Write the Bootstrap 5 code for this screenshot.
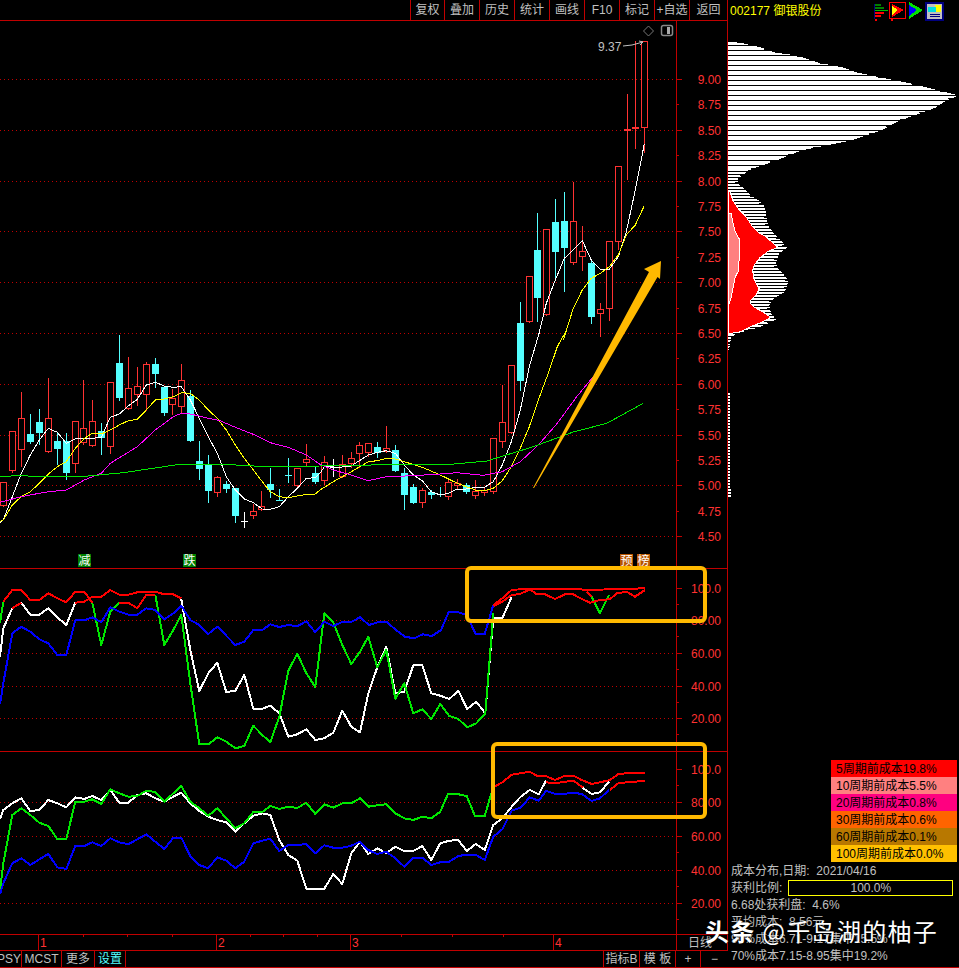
<!DOCTYPE html>
<html lang="zh">
<head>
    <meta charset="UTF-8">
    <title>002177 御银股份</title>
    <link href="https://cdn.jsdelivr.net/npm/bootstrap@5.3.0/dist/css/bootstrap.min.css" rel="stylesheet">
    <style>
        body {
            background-color: #000;
            color: #c0c0c0;
            font-family: "Liberation Sans", "Noto Sans CJK SC", sans-serif;
            font-size: 12px;
            line-height: 1;
            overflow: hidden;
        }
        .terminal { width: 959px; height: 968px; position: relative; }
        .chart-col { width: 728px; }
        .info-col { width: 231px; border-bottom: 1px solid #c00000; height: 968px; }
        .toolbar { height: 21px; border-bottom: 1px solid #c00000; border-right: 1px solid #c00000; }
        .tool-btn {
            width: 35px; height: 20px; padding: 0; border: 0; border-radius: 0;
            border-right: 1px solid #c00000; color: #c0c0c0; font-size: 12px; line-height: 1;
        }
        .tool-btn:first-child { border-left: 1px solid #c00000; }
        .tool-btn:last-child { width: 37px; border-right: 0; }
        #chart { display: block; width: 728px; height: 929px; }
        #chart text { font-family: "Liberation Sans", "Noto Sans CJK SC", sans-serif; font-size: 12px; }
        .axis-txt { fill: #ff3232; }
        .tabs { height: 18px; border-top: 1px solid #c00000; border-bottom: 1px solid #c00000; }
        .tab-cell {
            height: 16px; border-right: 1px solid #c00000; overflow: hidden; white-space: nowrap;
            display: flex; align-items: center; justify-content: center;
        }
        .w-psy { width: 22px; justify-content: flex-end; }
        .w-mcst { width: 40px; }
        .w-more { width: 33px; }
        .w-set { width: 31px; color: #54ffff; }
        .w-idx { width: 36px; }
        .w-plus { width: 25px; }
        .w-minus { width: 27px; border-right: 0; }
        .symbol-bar { height: 21px; padding-left: 2px; }
        .symbol-name { color: #ffff00; font-size: 12px; }
        .symbol-icons { margin-left: 53px; gap: 1px; }
        #chips { display: block; width: 231px; height: 739px; }
        .cost-legend { width: 126px; margin-left: 103px; }
        .cost-row { height: 17px; padding-left: 5px; color: #000; display: flex; align-items: center; white-space: nowrap; }
        .stats { padding: 0 0 0 3px; }
        .stat-row { height: 17px; display: flex; align-items: center; white-space: nowrap; }
        .profit-box {
            width: 165px; height: 16px; margin-left: 6px; border: 1px solid #ffff00;
            display: flex; align-items: center; justify-content: center;
        }
        .watermark {
            position: absolute; left: 705px; top: 916px; color: #fff; font-size: 24px; line-height: 30px;
            font-family: "Noto Sans CJK SC", sans-serif; letter-spacing: 1.3px; white-space: nowrap;
            text-shadow: 0 0 2px rgba(0, 0, 0, .7);
        }
        .watermark b { font-weight: 700; }
    </style>
</head>
<body>
    <div class="terminal d-flex">
        <!-- left: toolbar, chart, tabs -->
        <div class="chart-col d-flex flex-column">
            <div class="toolbar d-flex justify-content-end">
                <button class="btn tool-btn">复权</button>
                <button class="btn tool-btn">叠加</button>
                <button class="btn tool-btn">历史</button>
                <button class="btn tool-btn">统计</button>
                <button class="btn tool-btn">画线</button>
                <button class="btn tool-btn">F10</button>
                <button class="btn tool-btn">标记</button>
                <button class="btn tool-btn">+自选</button>
                <button class="btn tool-btn">返回</button>
            </div>
            <svg id="chart" viewBox="0 21 728 929"></svg>
            <div class="tabs d-flex">
                <div class="tab-cell w-psy">PSY</div>
                <div class="tab-cell w-mcst">MCST</div>
                <div class="tab-cell w-more">更多</div>
                <div class="tab-cell w-set">设置</div>
                <div class="tab-cell flex-grow-1"></div>
                <div class="tab-cell w-idx">指标B</div>
                <div class="tab-cell w-idx">模 板</div>
                <div class="tab-cell w-plus">+</div>
                <div class="tab-cell w-minus">−</div>
            </div>
        </div>

        <!-- right: chip distribution and stats -->
        <div class="info-col d-flex flex-column">
            <div class="symbol-bar d-flex align-items-center">
                <span class="symbol-name">002177 御银股份</span>
                <div class="symbol-icons d-flex">
                    <svg width="14" height="21" viewBox="0 0 14 21" shape-rendering="crispEdges">
                        <rect x="0" y="4" width="1" height="15" fill="#000080"/>
                        <rect x="1" y="4" width="6" height="2" fill="#008000"/>
                        <rect x="1" y="7" width="9" height="2" fill="#008000"/>
                        <rect x="1" y="10" width="13" height="1" fill="#00c000"/>
                        <rect x="1" y="12" width="9" height="2" fill="#ff0000"/>
                        <rect x="1" y="15" width="6" height="2" fill="#ff0000"/>
                        <rect x="1" y="19" width="2" height="2" fill="#ff0000"/>
                    </svg>
                    <svg width="18" height="21" viewBox="0 0 18 21" shape-rendering="crispEdges">
                        <rect x=".5" y="2.5" width="16" height="16" fill="#000" stroke="#ff0000"/>
                        <polygon points="3,4 15,10 3,17" fill="#ff0000"/>
                        <polygon points="3,6 9,10 3,15" fill="#ffff00"/>
                        <rect x="2" y="19" width="2" height="2" fill="#ff0000"/>
                    </svg>
                    <svg width="16" height="21" viewBox="0 0 16 21" shape-rendering="crispEdges">
                        <polygon points="1,2 15,10 1,19" fill="#00e000"/>
                        <polygon points="1,5 9,10 1,16" fill="#0000ff"/>
                    </svg>
                    <svg width="20" height="21" viewBox="0 0 20 21" shape-rendering="crispEdges">
                        <rect x="0" y="2" width="19" height="19" fill="#000080"/>
                        <rect x="2" y="4" width="15" height="15" fill="#c0c0c0"/>
                        <rect x="10" y="5" width="6" height="7" fill="#ffff00"/>
                        <rect x="3" y="7" width="8" height="5" fill="#00e0e0"/>
                        <rect x="5" y="14" width="10" height="1" fill="#000080"/>
                        <rect x="5" y="16" width="10" height="1" fill="#000080"/>
                    </svg>
                </div>
            </div>
            <svg id="chips" viewBox="727 21 231 739" shape-rendering="crispEdges"></svg>
            <div class="cost-legend">
                <div class="cost-row" style="background:#ff0000">5周期前成本19.8%</div>
                <div class="cost-row" style="background:#ff8080">10周期前成本5.5%</div>
                <div class="cost-row" style="background:#ff0080">20周期前成本0.8%</div>
                <div class="cost-row" style="background:#ff6400">30周期前成本0.6%</div>
                <div class="cost-row" style="background:#b87800">60周期前成本0.1%</div>
                <div class="cost-row" style="background:#ffc000">100周期前成本0.0%</div>
            </div>
            <div class="stats">
                <div class="stat-row">成本分布,日期:&nbsp; 2021/04/16</div>
                <div class="stat-row">获利比例:<div class="profit-box">100.0%</div></div>
                <div class="stat-row">6.68处获利盘:&nbsp; 4.6%</div>
                <div class="stat-row">平均成本:&nbsp; 8.56元</div>
                <div class="stat-row">90%成本6.71-9.17集中15.5%</div>
                <div class="stat-row">70%成本7.15-8.95集中19.2%</div>
            </div>
        </div>
        <div class="watermark"><b>头条</b> @千岛湖的柚子</div>
    </div>

    <script src="https://cdn.jsdelivr.net/npm/bootstrap@5.3.0/dist/js/bootstrap.bundle.min.js"></script>
    <script>
        const RED = '#ff3232', CYAN = '#54ffff', LINE = '#c00000', ORANGE = '#ffb900';

        // candles: high, body top, body bottom, low, colour (r/c/w). y is px in the picture * 3, origin differs per block
        const block1 = [
            [457,457,527,530,'r'],[304,304,422,428,'r'],[186,265,359,410,'r'],[252,312,336,342,'c'],[237,276,309,345,'c'],
            [144,265,365,365,'r'],[309,333,357,405,'c'],[309,333,429,450,'c'],[274,274,401,429,'r'],[150,295,340,345,'r'],
            [210,274,347,347,'r'],[279,303,324,375,'c'],[157,157,350,372,'r'],[15,99,204,212,'c'],[82,175,236,236,'r'],
            [111,169,196,228,'r'],[96,103,194,244,'r'],[84,102,132,174,'c'],[171,171,249,258,'c'],[178,205,224,255,'r'],
            [102,151,231,250,'r'],[180,198,333,333,'c'],[333,393,417,450,'c'],[375,405,483,519,'c'],[438,442,488,501,'r'],
            [453,462,477,489,'c'],[474,474,558,579,'c'],[546,574,574,594,'w'],[522,544,557,567,'r'],[483,529,539,543,'r'],
            [413,462,480,504,'c'],[477,509,509,513,'c'],[384,436,436,459,'c'],[414,414,467,467,'r'],[342,388,398,408,'r'],
            [411,429,456,462,'c']
        ];
        const block2 = [
            [378,397,453,465,'r'],[387,411,411,441,'w'],[375,403,441,441,'r'],[366,385,401,415,'r'],[336,346,372,414,'r'],
            [340,340,368,382,'r'],[336,351,369,384,'c'],[288,355,366,366,'r'],[345,360,423,423,'c'],[414,429,495,540,'c'],
            [462,471,519,522,'c'],[475,481,519,534,'r'],[480,486,495,507,'c'],[471,492,492,501,'c'],[448,456,502,510,'r'],
            [448,459,467,480,'r'],[459,465,486,492,'c'],[450,484,497,507,'r'],[471,480,489,498,'r'],[325,325,485,492,'r'],
            [165,277,335,354,'r'],[106,106,308,308,'r']
        ];
        const block3 = [
            [786,849,1023,1054,'c'],[709,709,845,845,'r'],[519,630,774,846,'c'],[568,568,824,824,'r'],[477,546,636,720,'c'],
            [456,543,624,756,'c'],[426,544,668,675,'r'],[558,634,650,693,'r'],[660,669,831,852,'c'],[790,808,821,890,'r'],
            [604,604,806,843,'r'],[379,379,605,630,'r'],[162,268,274,421,'r'],[4,262,268,327,'r'],[4,4,265,340,'r']
        ];
        const candles = [
            ...block1.map(c => [(c[0]/3+330),(c[1]/3+330),(c[2]/3+330),(c[3]/3+330),c[4]]),
            ...block2.map(c => [(c[0]/3+330),(c[1]/3+330),(c[2]/3+330),(c[3]/3+330),c[4]]),
            ...block3.map(c => [(c[0]/3+40),(c[1]/3+40),(c[2]/3+40),(c[3]/3+40),c[4]])
        ];

        // moving averages, traced from the crops: [origin x, origin y, x, y, x, y ...] in crop px
        const toAbs = (ox, oy, pts) => {
            const out = [];
            for (let i = 0; i < pts.length; i += 2) out.push((pts[i]/3 + ox).toFixed(1) + ',' + (pts[i+1]/3 + oy).toFixed(1));
            return out;
        };
        const ma = [
            ['#ffffff', 1, [...toAbs(0,330,[0,577,10,570,37,500,64,430,91,375,118,330,145,295,172,307,199,340,226,327,253,325,277,325,304,322,331,262,358,252,385,228,412,208,439,165,466,157,493,168,520,172,544,170,571,210,598,265,625,320,652,370,679,440,706,480,733,507,760,518,787,537,811,538,838,530,865,500,892,475,919,445,946,443,960,430]),
                ...toAbs(320,330,[13,410,40,411,67,411,94,408,118,392,145,375,172,367,199,362,226,370,253,405,280,435,307,452,334,485,361,495,385,490,412,477,439,477,466,472,493,472,520,455,547,405,574,335,601,240,628,110,660,0]),
                ...toAbs(490,40,[142,900,169,790,196,720,223,655,250,630,277,602,304,660,331,688,358,688,385,650,409,575,436,450,463,312])]],
            ['#ffff00', 1, [...toAbs(0,330,[0,575,10,570,37,525,64,500,91,485,118,460,145,432,172,410,199,395,226,355,253,325,277,310,304,312,331,300,358,285,385,272,412,268,439,240,466,210,493,207,520,200,544,188,571,190,598,210,625,240,652,265,679,300,706,345,733,385,760,420,787,455,811,485,838,500,865,503,892,498,919,493,946,492,960,480]),
                ...toAbs(320,330,[40,455,94,425,145,395,172,392,199,385,226,387,253,395,307,412,361,435,412,460,466,480,493,482,520,475,547,452,574,410,601,355,628,290,655,210,685,130,712,50,740,0]),
                ...toAbs(490,40,[220,900,250,805,277,750,304,715,331,700,358,680,385,645,409,585,436,555,463,497])]],
            ['#ff00ff', 1, [...toAbs(0,330,[0,517,64,500,118,490,145,485,199,480,253,450,304,430,331,400,412,350,466,300,520,260,544,250,571,252,625,265,660,272,706,292,760,313,811,338,865,352,919,375,960,403]),
                ...toAbs(320,330,[40,420,94,435,145,452,199,440,280,437,361,432,412,428,490,436,547,425,601,395,655,345,712,280,770,200,820,140,880,60])]],
            ['#00e800', 1, [...toAbs(0,330,[0,440,50,437,160,440,265,438,370,428,450,416,540,403,690,404,800,410,960,408]),
                ...toAbs(320,330,[200,404,370,405,500,393,640,350,760,306,860,280,970,220])]]
        ];

        // indicator lines, width 2
        const W = '#ffffff', G = '#00e800', B = '#0000ff', R = '#ff0000';
        const ind = [
            [W, [...toAbs(0,560,[0,290,10,205,37,145,64,128,91,164,118,164,145,145,172,172,199,195,226,128])]],
            [W, [...toAbs(0,560,[544,118,571,270,598,393,625,340,652,308,679,396,706,392,733,345,760,446,787,446,811,437,838,460,865,530,892,523,919,508,946,540,973,535,1000,518,1027,452,1054,500,1080,517]),
                ...toAbs(360,550,[25,430,52,352,79,290,106,430,133,425,160,346,187,346,214,430,241,437,268,447,295,422,322,477,349,455,376,490,400,205,427,205,455,140])]],
            [G, toAbs(0,560,[0,190,10,125])],
            [G, toAbs(0,560,[277,128,304,255,331,155,358,128])],
            [G, [...toAbs(0,560,[466,104,493,255,520,210,544,165,571,370,598,553,625,553,652,532,679,545,706,565,733,558,760,497,787,525,811,547,838,470,865,332,892,281,919,340,946,381,973,160,1000,187,1027,255,1054,312,1080,275]),
                ...toAbs(360,550,[25,260,52,352,79,300,106,446,133,400,160,490,187,478,214,507,241,462,268,498,295,507,322,532,349,520,376,490,400,190])]],
            [G, toAbs(360,550,[695,140,720,190,747,135])],
            [B, [...toAbs(0,560,[0,433,10,370,37,220,64,200,91,215,118,238,145,250,172,285,199,285,226,181,253,181,277,172,304,187,331,142,358,155,385,164,412,164,439,145,466,150,493,178,520,160,544,137,571,180,598,195,625,222,652,200,679,227,706,255,733,245,760,210,787,210,811,193,838,201,865,195,892,199,919,184,946,217,973,185,1000,198,1027,186,1054,186,1080,172]),
                ...toAbs(360,550,[27,225,54,217,81,217,108,240,135,260,162,265,189,253,216,258,243,240,266,186,293,186,320,195,347,252,374,252,400,165])]],
            [R, toAbs(0,560,[10,125,37,90,64,90,91,120,118,120,145,100,172,115,199,127,226,95,253,95,277,128])],
            [R, toAbs(0,560,[226,128,253,125,277,110,304,110,331,90,358,104,385,104,412,97,439,95,466,95,493,103,520,103,544,115])],
            [R, toAbs(0,560,[37,145,64,128])],
            [R, toAbs(0,560,[358,128,385,128,412,145,439,105,466,104])],
            [R, toAbs(360,550,[400,165,427,145,455,120,480,118,510,118,660,118,680,120,855,115])],
            [R, toAbs(360,550,[400,168,427,155,455,135,480,132,510,118,530,133,555,133,585,147,615,133,640,133,665,147,690,158,720,150,750,148,770,130,800,125,825,140,855,120])],
            [R, toAbs(360,550,[680,125,695,140])],
            // lower panel
            [W, [...toAbs(0,750,[0,207,10,180,37,160,64,145,91,183,118,180,145,150,172,160,199,172,226,142,253,147,277,138,304,150,331,120,358,158,385,158,412,135,439,130,466,145,493,155,520,140,544,128,571,160,598,183,625,200,652,210,679,217,706,245,733,220,760,197,787,190,811,195,838,270,865,315,892,332,919,416,946,416,973,416,1000,372,1027,402,1054,310,1080,275]),
                ...toAbs(360,740,[25,342,52,325,79,340,106,320,133,333,160,333,187,318,214,360,241,310,268,302,295,300,320,333,347,312,374,330,400,255,427,235,455,200,482,170,509,150,536,163,558,122])]],
            [W, toAbs(360,740,[665,142,695,162,720,157,747,125])],
            [G, [...toAbs(0,750,[0,420,10,340,37,195,64,175,91,195,118,218,145,228,172,267,199,267,226,155,253,155,277,148,304,162,331,118,358,130,385,140,412,138,439,122,466,126,493,155,520,130,544,108,571,155,598,175,625,197,652,175,679,205,706,235,733,220,760,186,787,186,811,168,838,177,865,170,892,174,919,158,946,192,973,163,1000,173,1027,160,1054,160,1080,145]),
                ...toAbs(360,740,[25,200,52,196,79,193,106,220,133,235,160,240,187,230,214,235,241,215,264,162,291,162,320,168,345,228,374,228,400,140])]],
            [B, [...toAbs(0,750,[0,432,10,400,37,340,64,325,91,345,118,328,145,312,172,352,199,357,226,288,253,288,277,277,304,288,331,265,358,277,385,283,412,268,439,253,466,275,493,297,520,263,544,263,571,318,598,345,625,355,652,322,679,332,706,355,733,335,760,280,787,272,811,266,838,303,865,285,892,285,919,282,946,310,973,286,1000,293,1027,293,1054,287,1080,275]),
                ...toAbs(360,740,[25,330,52,342,79,335,106,355,133,380,160,353,187,353,214,375,241,367,268,365,295,348,320,344,347,344,374,360,400,290,427,268,455,212,482,203,509,172,536,182,558,153,585,161,615,161,640,158,665,162,695,183,720,175,747,150])]],
            [R, toAbs(360,740,[400,142,427,127,455,104,482,100,509,95,530,107,555,107,585,120,615,107,640,107,665,120,695,132,720,127,750,120,775,102,800,100,825,98,855,98])],
            [R, toAbs(360,740,[558,127,585,130,615,125,640,122,665,140,670,142])],
            [R, toAbs(360,740,[750,150,775,130,800,127,825,125,855,122])]
        ];

        let s = '';
        const hline = (y, x1, x2, c) => s += `<rect x="${x1}" y="${y}" width="${x2-x1}" height="1" fill="${c}"/>`;
        const vline = (x, y1, y2, c) => s += `<rect x="${x}" y="${Math.round(y1)}" width="1" height="${Math.max(1, Math.round(y2)-Math.round(y1))}" fill="${c}"/>`;
        const dotted = y => s += `<line x1="0" x2="676" y1="${y+.5}" y2="${y+.5}" stroke="${LINE}" stroke-dasharray="1 3"/>`;
        const label = (x, y, t, cls, extra) => s += `<text x="${x}" y="${y}" class="${cls||''}" ${extra||''}>${t}</text>`;

        s += '<g shape-rendering="crispEdges">';
        // price axis
        const priceY = p => Math.round(79 + (9 - p) * 101.6);
        for (let p = 4.5; p <= 9; p += 0.5) dotted(priceY(p));
        for (let p = 4.5; p <= 9.01; p += 0.25) {
            const major = Math.round(p * 2) === p * 2;
            hline(priceY(p), 676, major ? 682 : 679, LINE);
            label(721, priceY(p) + 5, p.toFixed(2), 'axis-txt', 'text-anchor="end"');
        }
        // indicator grids
        [620, 653, 686, 718, 802, 836, 870, 903].forEach(dotted);
        [[588,'100.0'],[620,'80.00'],[653,'60.00'],[686,'40.00'],[718,'20.00'],[769,'100.0'],[802,'80.00'],[836,'60.00'],[870,'40.00'],[903,'20.00']].forEach(t => {
            hline(t[0], 676, 682, LINE);
            hline(t[0] + 16, 676, 679, LINE);
            label(721, t[0] + 5, t[1], 'axis-txt', 'text-anchor="end"');
        });
        // frame
        hline(568, 0, 727, LINE); hline(751, 0, 727, LINE); hline(934, 0, 727, LINE);
        vline(676, 21, 950, LINE); vline(727, 21, 950, LINE);
        [38, 216, 350, 553].forEach((x, i) => {
            vline(x, 934, 950, LINE);
            label(x + 2, 947, i + 1, 'axis-txt');
        });
        [83, 127, 172, 250, 283, 317, 401, 452, 503].forEach(x => vline(x, 934, 937, LINE));
        label(688, 947, '日线', '', 'fill="#c0c0c0"');

        // candles
        candles.forEach((c, i) => {
            const x = Math.round(3.3 + 8.903 * i);
            const col = c[4] === 'r' ? RED : c[4] === 'c' ? CYAN : '#fff';
            vline(x, c[0], c[1], col);
            vline(x, c[2], c[3], col);
            const top = Math.round(c[1]), bot = Math.round(c[2]);
            if (bot - top < 1) {
                hline(top, x - 3, x + 4, col);
            } else if (c[4] === 'r') {
                s += `<rect x="${x-2.5}" y="${top+.5}" width="6" height="${bot-top-1}" fill="#000" stroke="${col}"/>`;
            } else {
                s += `<rect x="${x-3}" y="${top}" width="7" height="${bot-top}" fill="${col}"/>`;
            }
        });
        ma.forEach(l => s += `<polyline points="${l[2].join(' ')}" fill="none" stroke="${l[0]}" stroke-width="${l[1]}"/>`);
        ind.forEach(l => s += `<polyline points="${l[1].join(' ')}" fill="none" stroke="${l[0]}" stroke-width="2" stroke-linejoin="round"/>`);
        s += '</g>';

        // markers
        const tag = (x, t, c) => {
            s += `<rect x="${x}" y="554" width="13" height="13" fill="${c}"/>`;
            label(x + .5, 565, t, '', 'fill="#fff"');
        };
        tag(78, '减', '#008000'); tag(183, '跌', '#008000'); tag(620, '预', '#b85500'); tag(637, '榜', '#b85500');

        // high price note
        label(598, 51, '9.37', '', 'fill="#c0c0c0"');
        s += '<polyline points="623,46 632,45 643,42" fill="none" stroke="#c0c0c0"/><polyline points="639,41 643,42 640,45" fill="none" stroke="#c0c0c0"/>';
        s += '<polygon points="648.5,26 653.5,31 648.5,36 643.5,31" fill="none" stroke="#777"/>';
        s += '<rect x="661.5" y="25.5" width="11" height="10" rx="2" fill="#000" stroke="#888" stroke-width="1.5"/><rect x="667" y="27" width="3" height="7" fill="#aaa"/>';

        // orange marks
        s += `<polygon points="533,488 649,272 644,269 661,261 660,279 657.5,277 534,488" fill="${ORANGE}"/>`;
        s += `<rect x="467" y="568" width="238" height="53" rx="4" fill="none" stroke="${ORANGE}" stroke-width="4"/>`;
        s += `<rect x="493" y="744" width="212" height="73" rx="4" fill="none" stroke="${ORANGE}" stroke-width="4"/>`;
        document.getElementById('chart').innerHTML = s;

        // chip distribution
        const profile = [[42,739],[47,760],[52,774],[55,796],[62,817],[67,842],[72,856],[78,885],[83,910],[90,938],[95,958],[100,945],[107,935],[115,913],[120,899],[130,880],[140,850],[150,800],[160,775],[170,747],[175,742],[178,737],[183,737],[190,745],[195,750],[200,758],[205,763],[213,765],[220,766],[227,768],[233,773],[240,780],[247,786],[253,778],[262,775],[267,776],[273,782],[280,787],[287,786],[292,783],[298,773],[305,768],[313,770],[319,775],[327,758],[333,735],[337,730],[350,728]];
        const widthAt = y => {
            for (let i = 1; i < profile.length; i++) {
                if (y <= profile[i][0]) {
                    const a = profile[i-1], b = profile[i];
                    return a[1] + (b[1] - a[1]) * (y - a[0]) / (b[0] - a[0]);
                }
            }
            return 728;
        };
        let c = '';
        for (let y = 42; y < 350; y++) {
            const pitch = y < 170 ? 5 : 3;
            const jag = y % 7 === 0 ? 3 : 0;
            if (y % pitch !== 0) c += `<rect x="727" y="${y}" width="${Math.round(widthAt(y) - 727 - jag)}" height="1" fill="#fff"/>`;
        }
        for (let y = 393; y < 498; y += 3) c += `<rect x="727" y="${y}" width="${y > 488 ? 3 : 2}" height="2" fill="#fff"/>`;
        const chipPts = (pts) => pts.map(p => (725 + p[0]/3).toFixed(1) + ',' + (170 + p[1]/3).toFixed(1)).join(' ');
        const redEdge = [[10,60],[20,90],[40,120],[60,140],[80,170],[100,190],[120,200],[155,232],[125,245],[100,265],[85,285],[80,300],[82,320],[90,340],[100,357],[92,372],[75,390],[72,398],[85,412],[110,425],[135,442],[100,460],[70,472],[45,485],[15,490]];
        c += `<polygon points="${chipPts([[8,60],...redEdge,[8,490]])}" fill="#ff0000" stroke="#fff" stroke-width="1"/>`;
        c += `<polygon points="${chipPts([[8,130],[15,130],[20,155],[28,185],[40,207],[40,265],[36,305],[28,320],[22,350],[15,385],[10,400],[8,400]])}" fill="#ff8080" stroke="#fff" stroke-width="1"/>`;
        document.getElementById('chips').innerHTML = c;
    </script>
</body>
</html>
